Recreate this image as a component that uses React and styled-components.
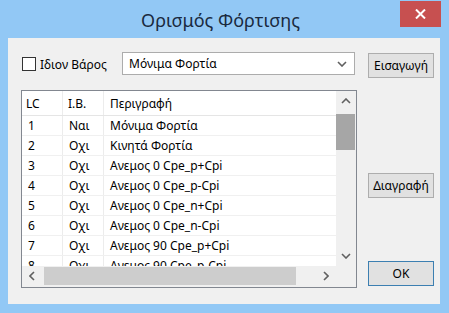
import React from 'react';
import styled, { createGlobalStyle } from 'styled-components';

const GlobalStyle = createGlobalStyle`
  html, body { margin: 0; padding: 0; background: #92c8f5; }
  body { font-family: "Noto Sans", "Open Sans", sans-serif; font-size: 12px; color: #000; }
`;

const Window = styled.div`
  width: 449px;
  height: 313px;
  box-sizing: border-box;
  background: #92c8f5;
  display: flex;
  flex-direction: column;
  padding: 0 9px 9px 8px;
`;

const TitleBar = styled.div`
  height: 38px;
  margin: 0 -9px 0 -8px;
  padding-right: 8px;
  display: grid;
  grid-template-columns: 1fr auto 1fr;
  align-items: start;
`;

const Title = styled.div`
  grid-column: 2;
  margin-top: 6px;
  line-height: 28px;
  font-size: 18px;
  color: #1a2a40;
  white-space: nowrap;
`;

const CloseButton = styled.div`
  grid-column: 3;
  justify-self: end;
  margin-top: 1px;
  width: 41px;
  height: 26px;
  background: #c75050;
  display: flex;
  align-items: center;
  justify-content: center;
`;

const Client = styled.div`
  flex: 1;
  background: #f0f0f0;
  display: flex;
  gap: 11px;
  padding: 14px 6px 0 13px;
`;

const LeftCol = styled.div`
  width: 336px;
  display: flex;
  flex-direction: column;
`;

const TopRow = styled.div`
  height: 24px;
  display: flex;
  align-items: center;
`;

const CheckLabel = styled.label`
  width: 101px;
  display: flex;
  align-items: center;
  gap: 4px;
  white-space: nowrap;
`;

const Box = styled.span`
  width: 14px;
  height: 14px;
  box-sizing: border-box;
  border: 1px solid #333;
  background: #fff;
  margin-left: 1px;
`;

const Select = styled.div`
  width: 233px;
  height: 23px;
  box-sizing: border-box;
  border: 1px solid #acacac;
  background: #fff;
  display: flex;
  align-items: center;
  justify-content: space-between;
  padding: 0 7px 0 6px;
  align-self: flex-start;
`;

const ListBox = styled.div`
  margin-top: 14px;
  height: 198px;
  box-sizing: border-box;
  border: 1px solid #828790;
  background: #fff;
  display: grid;
  grid-template-columns: 1fr 20px;
  grid-template-rows: 1fr 21px;
  overflow: hidden;
`;

const DataArea = styled.div`
  overflow: hidden;
`;

const Row = styled.div`
  display: grid;
  grid-template-columns: 41px 41px 1fr;
  height: ${p => (p.$header ? 25 : 20)}px;
  box-sizing: border-box;
  border-bottom: 1px solid ${p => (p.$header ? '#e5e5e5' : '#f0f0f0')};
`;

const Cell = styled.div`
  display: flex;
  align-items: center;
  padding-left: ${p => p.$pad || 6}px;
  white-space: nowrap;
  border-right: ${p => (p.$last ? 'none' : '1px solid #ececec')};
`;

const VScroll = styled.div`
  background: #f0f0f0;
  display: flex;
  flex-direction: column;
`;

const HScroll = styled.div`
  background: #f0f0f0;
  display: flex;
  align-items: flex-start;
`;

const Corner = styled.div`
  background: #f0f0f0;
`;

const ArrowBtn = styled.div`
  width: 20px;
  height: 20px;
  display: flex;
  align-items: center;
  justify-content: center;
  flex-shrink: 0;
`;

const VThumb = styled.div`
  margin: 3px 1px 0 0;
  height: 36px;
  background: #a6a6a6;
`;

const Spacer = styled.div`
  flex: 1;
`;

const HThumb = styled.div`
  margin: 1px 0 0 2px;
  width: 252px;
  height: 18px;
  background: #cdcdcd;
`;

const RightCol = styled.div`
  width: 66px;
  display: flex;
  flex-direction: column;
`;

const Button = styled.div`
  margin-top: ${p => p.$top}px;
  height: 25px;
  box-sizing: border-box;
  border: 1px solid ${p => (p.$default ? '#3c7fb1' : '#adadad')};
  background: #e1e1e1;
  display: flex;
  align-items: center;
  justify-content: center;
  white-space: nowrap;
`;

const Chevron = ({ dir }) => {
  const pts = {
    down: '1,1 5,5 9,1',
    up: '1,5 5,1 9,5',
    left: '5,1 1,5 5,9',
    right: '1,1 5,5 1,9',
  }[dir];
  const vertical = dir === 'up' || dir === 'down';
  return (
    <svg width={vertical ? 10 : 6} height={vertical ? 6 : 10} viewBox={vertical ? '0 0 10 6' : '0 0 6 10'}>
      <polyline points={pts} fill="none" stroke="#606060" strokeWidth="1.6" />
    </svg>
  );
};

const rows = [
  ['1', 'Ναι', 'Μόνιμα Φορτία'],
  ['2', 'Οχι', 'Κινητά Φορτία'],
  ['3', 'Οχι', 'Ανεμος 0 Cpe_p+Cpi'],
  ['4', 'Οχι', 'Ανεμος 0 Cpe_p-Cpi'],
  ['5', 'Οχι', 'Ανεμος 0 Cpe_n+Cpi'],
  ['6', 'Οχι', 'Ανεμος 0 Cpe_n-Cpi'],
  ['7', 'Οχι', 'Ανεμος 90 Cpe_p+Cpi'],
  ['8', 'Οχι', 'Ανεμος 90 Cpe_p-Cpi'],
];

export default function App() {
  return (
    <>
      <GlobalStyle />
      <Window>
        <TitleBar>
          <Title>Ορισμός Φόρτισης</Title>
          <CloseButton>
            <svg width="11" height="10" viewBox="0 0 11 10">
              <path d="M1 0.5 L10 9.5 M10 0.5 L1 9.5" stroke="#fff" strokeWidth="2" />
            </svg>
          </CloseButton>
        </TitleBar>
        <Client>
          <LeftCol>
            <TopRow>
              <CheckLabel>
                <Box />
                Ιδιον Βάρος
              </CheckLabel>
              <Select>
                Μόνιμα Φορτία
                <Chevron dir="down" />
              </Select>
            </TopRow>
            <ListBox>
              <DataArea>
                <Row $header>
                  <Cell $pad={4}>LC</Cell>
                  <Cell $pad={5}>I.B.</Cell>
                  <Cell $last>Περιγραφή</Cell>
                </Row>
                {rows.map(r => (
                  <Row key={r[0]}>
                    <Cell>{r[0]}</Cell>
                    <Cell>{r[1]}</Cell>
                    <Cell $last>{r[2]}</Cell>
                  </Row>
                ))}
              </DataArea>
              <VScroll>
                <ArrowBtn><Chevron dir="up" /></ArrowBtn>
                <VThumb />
                <Spacer />
                <ArrowBtn><Chevron dir="down" /></ArrowBtn>
              </VScroll>
              <HScroll>
                <ArrowBtn><Chevron dir="left" /></ArrowBtn>
                <HThumb />
                <Spacer />
                <ArrowBtn><Chevron dir="right" /></ArrowBtn>
              </HScroll>
              <Corner />
            </ListBox>
          </LeftCol>
          <RightCol>
            <Button $top={1}>Εισαγωγή</Button>
            <Button $top={95}>Διαγραφή</Button>
            <Button $top={63} $default>OK</Button>
          </RightCol>
        </Client>
      </Window>
    </>
  );
}
